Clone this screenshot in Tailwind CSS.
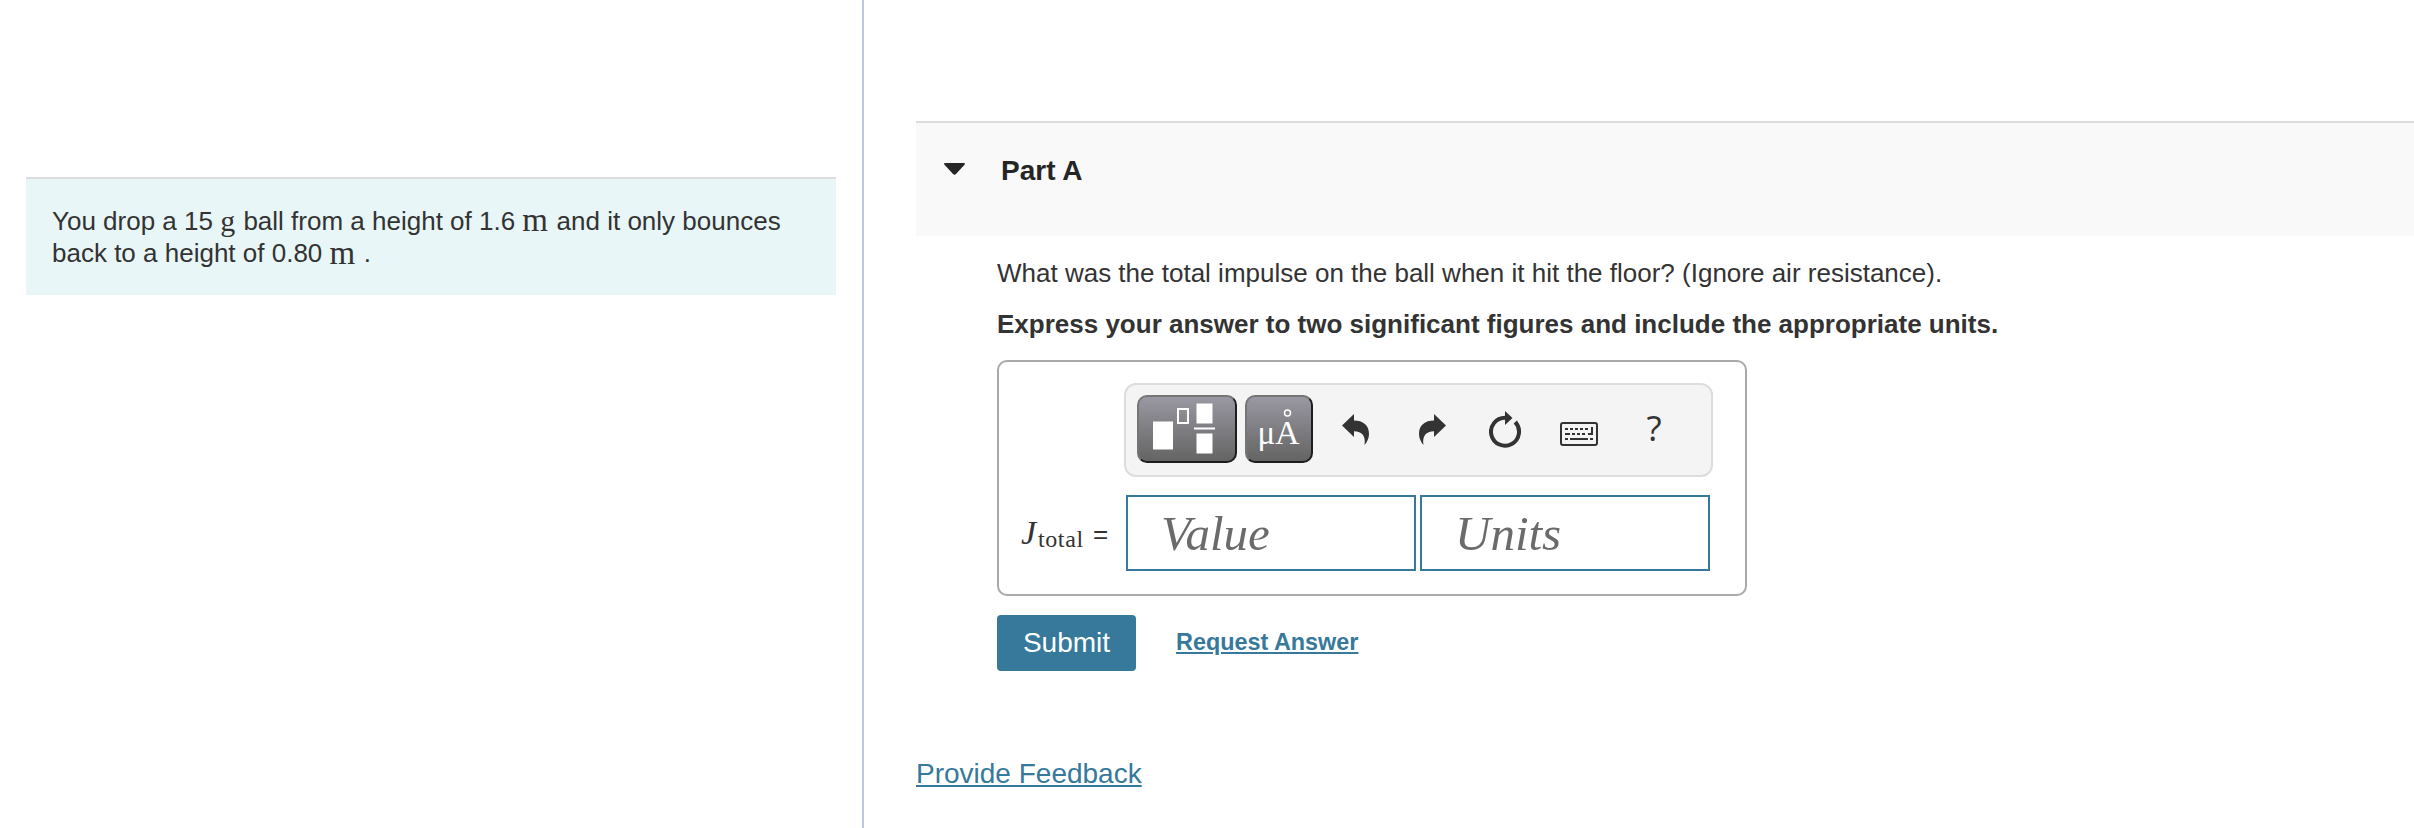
<!DOCTYPE html>
<html lang="en">
<head>
    <meta charset="UTF-8" />
    <meta name="viewport" content="width=device-width, initial-scale=1.0" />
    <title>Part A - Total impulse</title>
    <script src="https://cdn.jsdelivr.net/npm/@tailwindcss/browser@4"></script>
</head>
<body class="bg-white h-[828px] flex overflow-hidden font-['Liberation_Sans',Arial,sans-serif] text-[26px] leading-8 text-[#333]">
    <!-- ====== Problem statement ====== -->
    <aside class="w-[864px] shrink-0 border-r-2 border-[#b9c8da] pt-[177px] pl-[26px]">
        <div class="w-[810px] h-[118px] bg-[#e8f6f7] border-t-2 border-[#ddd] pt-[26px] pl-[26px] whitespace-nowrap">
            <p class="h-8">You drop a 15 <span class="inline-block w-4 h-8 align-top text-[30px] font-['Liberation_Serif',serif]">g</span> ball from a height of 1.6 <span class="inline-block w-[27px] h-8 -mt-px align-top text-[33px] font-['Liberation_Serif',serif]">m</span> and it only bounces</p>
            <p class="h-8">back to a height of 0.80 <span class="inline-block w-[27px] h-8 align-top text-[33px] font-['Liberation_Serif',serif]">m</span> .</p>
        </div>
    </aside>

    <!-- ====== Part A ====== -->
    <main class="flex-1 pt-[121px] pl-[52px]">
        <header class="h-[115px] bg-[#f9f9f9] border-t-2 border-[#ddd] flex items-start pl-7">
            <svg class="mt-10 shrink-0" width="22" height="12" viewBox="0 0 22 12" fill="#252525"><path d="M1 0H20Q21.500 .4 20.500 1.700L12 11Q10.500 12.500 9 11L.5 1.700Q-.5 .4 1 0Z"/></svg>
            <h1 class="ml-[35px] mt-8 text-[28px] font-bold text-[#252525]">Part A</h1>
        </header>

        <section class="pl-[81px] whitespace-nowrap">
            <p class="mt-[21px]">What was the total impulse on the ball when it hit the floor? (Ignore air resistance).</p>
            <p class="mt-[19px] font-bold">Express your answer to two significant figures and include the appropriate units.</p>

            <div class="mt-5 w-[750px] h-[236px] border-2 border-[#a9a9a9] rounded-[10px] pt-[21px]">
                <!-- ====== Toolbar ====== -->
                <div class="ml-[125px] w-[589px] h-[94px] bg-[#f4f4f4] border-2 border-[#ddd] rounded-xl flex items-start pl-[11px] pt-[10px]">
                    <button class="w-[100px] h-[68px] shrink-0 rounded-[10px] border-2 border-t-[#757575] border-l-[#757575] border-r-[#1d1d1d] border-b-[#1d1d1d] bg-linear-to-b from-[#9a98a2] to-[#646464]">
                        <svg width="96" height="64" viewBox="0 0 96 64" fill="#fff"><path d="M14 24.500h20v28H14zM57.500 6.500h16v20h-16zM55 30.500h21v2H55zM57.500 36.500h16v20h-16z"/><rect x="39" y="12" width="10" height="14" fill="none" stroke="#fff" stroke-width="2"/></svg>
                    </button>
                    <button class="ml-2 w-[68px] h-[68px] shrink-0 rounded-[10px] border-2 border-t-[#757575] border-l-[#757575] border-r-[#1d1d1d] border-b-[#1d1d1d] bg-linear-to-b from-[#9a98a2] to-[#646464] text-white font-['Liberation_Serif',serif]">
                        <!-- The ring sits apart from the letter, so it is drawn on its own -->
                        <svg width="64" height="64" viewBox="0 0 64 64" fill="#fff" font-size="34" aria-label="μÅ"><text x="10.500" y="47" font-size="33">μ</text><text x="28" y="47">A</text><circle cx="40.500" cy="16" r="3" fill="none" stroke="#fff" stroke-width="1.500"/></svg>
                    </button>
                    <svg class="ml-[29px] mt-[19px] shrink-0" width="28" height="31" viewBox="0 0 28 31" fill="#333"><path d="M0 11.500L12 0V6.500C21 6.500 27 11 27 20C27 24.500 25 28 22.500 31C24 22 20 17.300 12 17.300V23Z"/></svg>
                    <svg class="ml-[49px] mt-[19px] shrink-0" width="28" height="31" viewBox="0 0 28 31" fill="#333"><path d="M27 11.500L15 0V6.500C6 6.500 0 11 0 20C0 24.500 2 28 4.500 31C3 22 7 17.300 15 17.300V23Z"/></svg>
                    <svg class="ml-[42px] mt-4 shrink-0" width="32" height="37" viewBox="0 0 32 37"><path d="M16 6.700A14 14 0 1 0 26.300 11.200" fill="none" stroke="#333" stroke-width="4"/><path d="M16 0L23.500 7L16 14ZM24.500 13L28 9.500L29.500 14Z" fill="#333"/></svg>
                    <svg class="ml-[39px] mt-[27px] shrink-0" width="38" height="24" viewBox="0 0 38 24" fill="#333"><rect x="1" y="1" width="36" height="22" rx="2" fill="none" stroke="#333" stroke-width="2"/><path d="M5 6h3v2H5zM10 6h3v2h-3zM15 6h3v2h-3zM20 6h3v2h-3zM25 6h3v2h-3zM31 5h2v8h-5v-2h3zM5 11h5v2H5zM12 11h3v2h-3zM17 11h3v2h-3zM22 11h3v2h-3zM5 16h3v2H5zM10 16h18v2H10zM30 16h3v2h-3z"/></svg>
                    <span class="ml-[46px] mt-[17px] text-[35px] leading-8 text-[#333] font-['Open_Sans',sans-serif] w-5 text-center">?</span>
                </div>

                <!-- ====== Answer row ====== -->
                <div class="mt-[18px] flex items-start">
                    <div class="w-[127px] flex items-start pl-[22px] pt-[22px]">
                        <span class="w-[17px] text-[34px] leading-8 italic font-['Liberation_Serif',serif]">J</span>
                        <span class="mt-[6px] w-[47px] text-[24px] leading-8 tracking-[0.6px] font-['Liberation_Serif',serif]">total</span>
                        <span class="ml-[8px] mt-[1px]">=</span>
                    </div>
                    <input type="text" placeholder="Value" class="w-[290px] h-[76px] border-2 border-[#36799b] pl-[33px] text-[49px] italic placeholder:text-[#6b6b6b] font-['Liberation_Serif',serif]" />
                    <input type="text" placeholder="Units" class="ml-1 w-[290px] h-[76px] border-2 border-[#36799b] pl-[33px] text-[49px] italic placeholder:text-[#6b6b6b] font-['Liberation_Serif',serif]" />
                </div>
            </div>

            <div class="mt-[19px] flex items-start">
                <button class="w-[139px] h-14 rounded bg-[#36799b] text-white text-[28px]">Submit</button>
                <a href="#" class="ml-10 mt-[11px] text-[23.400px] font-bold text-[#36799b] underline decoration-2 underline-offset-2">Request Answer</a>
            </div>
        </section>

        <a href="#" class="inline-block mt-[87px] text-[28px] text-[#36799b] underline decoration-2 underline-offset-2">Provide Feedback</a>
    </main>
</body>
</html>
